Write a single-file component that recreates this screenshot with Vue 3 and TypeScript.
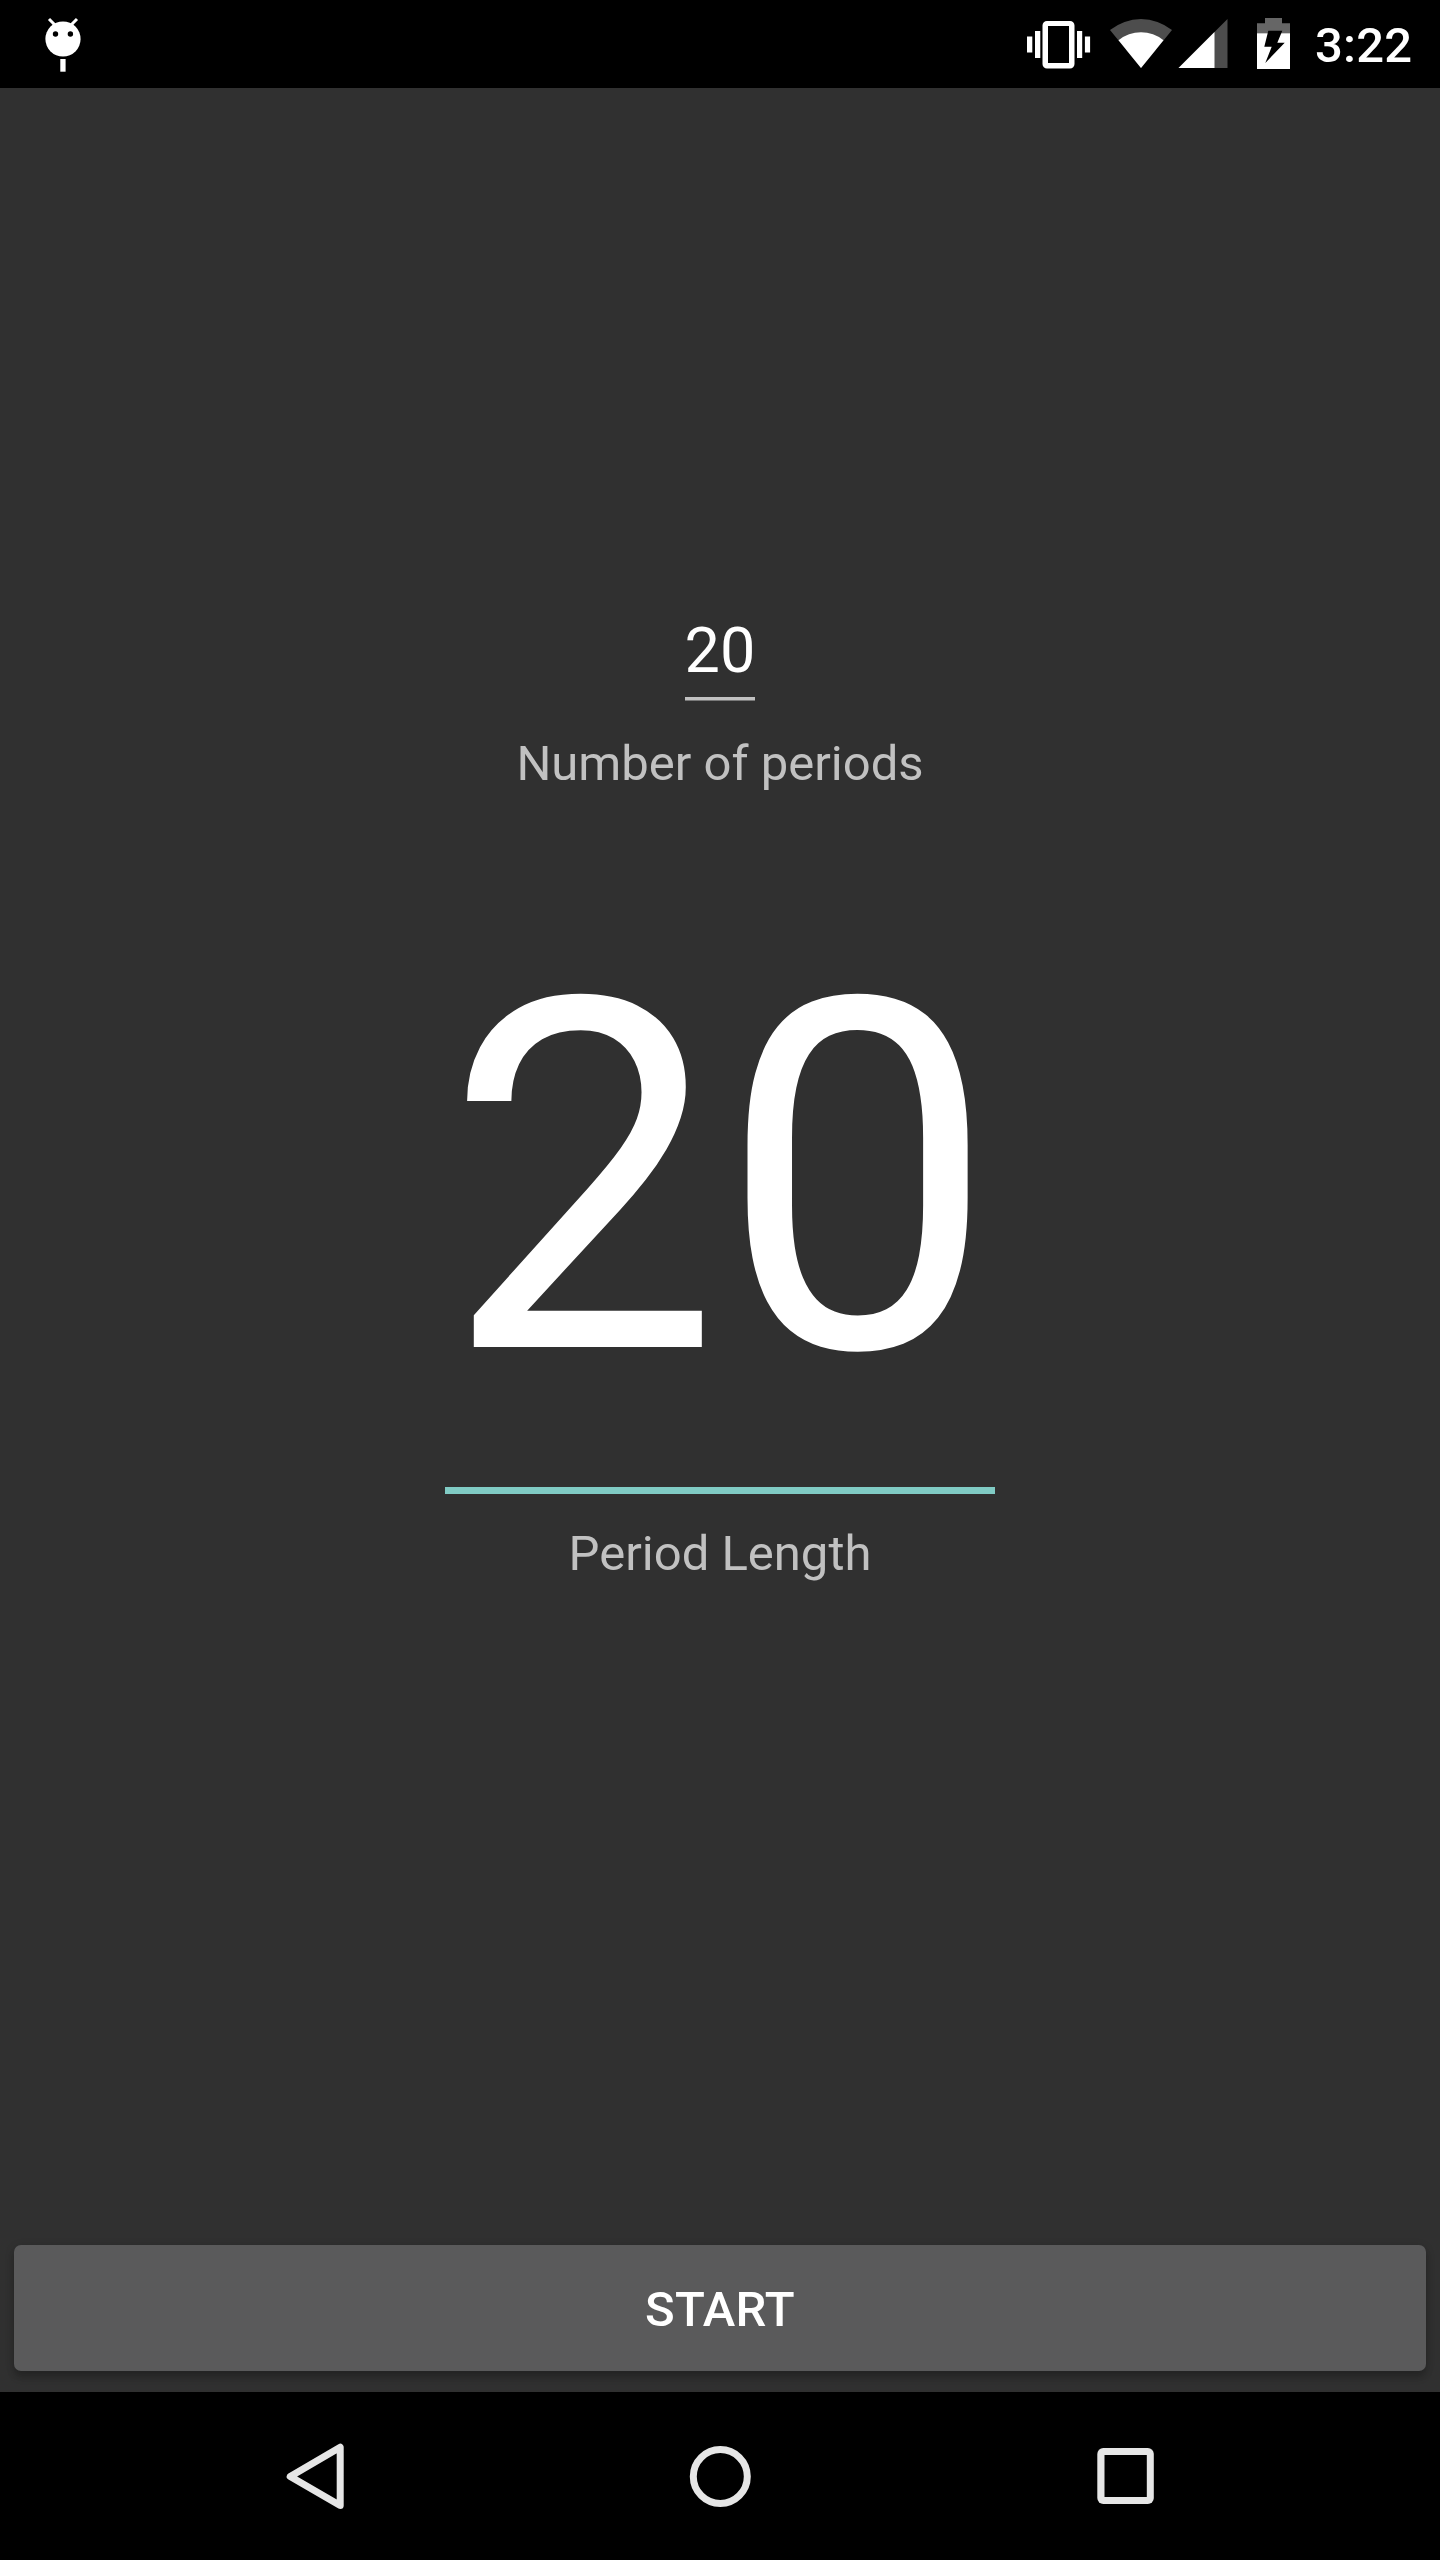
<script setup lang="ts">
interface Field {
  id: string
  value: string
  label: string
}

const time: string = '3:22'
const fields: Field[] = [
  { id: 'count', value: '20', label: 'Number of periods' },
  { id: 'length', value: '20', label: 'Period Length' },
]
</script>

<template>
  <div class="screen">
    <header class="status">
      <svg class="debug" width="40" height="88" viewBox="43 0 40 88">
        <path d="M49 19l7 7M77 19l-7 7" stroke="#fff" stroke-width="3" fill="none" />
        <circle cx="63" cy="39" r="17.6" fill="#fff" />
        <circle cx="55.5" cy="34" r="2.7" />
        <circle cx="70.4" cy="34" r="2.7" />
        <path d="M60.3 59h5.3v12.7h-5.3z" fill="#fff" />
      </svg>
      <div class="indicators">
        <svg width="64" height="88" viewBox="1027 0 64 88">
          <path d="M1027 36.5h5.3v16h-5.3zM1035 31h5.3v27h-5.3zM1077 31h5.2v27h-5.2zM1084.9 36.5h5.2v16h-5.2z" fill="#fff" />
          <path fill-rule="evenodd" d="M1047 21h23a4.5 4.5 0 0 1 4.5 4.5v38.6a4.5 4.5 0 0 1-4.5 4.5h-23a4.5 4.5 0 0 1-4.5-4.5V25.500a4.500 4.500 0 0 1 4.500-4.500zM1048 26v37h21V26z" fill="#fff" />
        </svg>
        <svg class="wifi" width="64" height="88" viewBox="1109 0 64 88">
          <path d="M1141 68L1110 30A49.500 49.500 0 0 1 1172 30z" fill="#4d4d4d" />
          <path d="M1141 68L1118.500 40.300A35.500 35.500 0 0 1 1163.500 40.300z" fill="#fff" />
        </svg>
        <svg class="signal" width="50" height="88" viewBox="1177.500 0 50 88">
          <path d="M1178 68L1227 19v49z" fill="#4d4d4d" />
          <path d="M1178 68L1214 32v36z" fill="#fff" />
        </svg>
        <svg class="battery" width="33" height="88" viewBox="1257 0 33 88">
          <path d="M1265 18h17v5.300h8v10.200h-33V23.300h8z" fill="#666" />
          <path d="M1257 33.300h33V69h-33z" fill="#fff" />
          <path d="M1268.300 30.700h14l-5 12h7.400L1265.300 63l6.400-16.300h-7.400z" />
        </svg>
        <span class="clock">{{ time }}</span>
      </div>
    </header>

    <main class="content">
      <section v-for="field in fields" :key="field.id" class="field" :class="field.id">
        <div class="value">{{ field.value }}</div>
        <div class="line"></div>
        <div class="label">{{ field.label }}</div>
      </section>
      <button class="start" type="button">START</button>
    </main>

    <nav class="nav">
      <svg width="80" height="80" viewBox="274 2436 80 80">
        <path d="M340.200 2447.200v58.400L290.200 2476.400z" fill="none" stroke="#e6e6e6" stroke-width="7" stroke-linejoin="round" />
      </svg>
      <svg width="80" height="80" viewBox="680 2436 80 80">
        <circle cx="720.3" cy="2476.500" r="27" fill="none" stroke="#e6e6e6" stroke-width="7" />
      </svg>
      <svg width="80" height="80" viewBox="1086 2436 80 80">
        <rect x="1097.300" y="2448" width="56.500" height="56" rx="6" fill="#e6e6e6" />
        <rect x="1104.500" y="2455" width="42.300" height="42" />
      </svg>
    </nav>
  </div>
</template>

<style>
body {
  margin: 0;
  background: #303030;
}
</style>

<style scoped>
.screen {
  width: 1440px;
  height: 2560px;
  display: flex;
  flex-direction: column;
  overflow: hidden;
  background: #303030;
  color: #fff;
  font-family: Roboto, sans-serif;
}
svg {
  display: block;
  flex: none;
}
.status {
  height: 88px;
  flex: none;
  box-sizing: border-box;
  padding: 0 28px 0 43px;
  display: flex;
  justify-content: space-between;
  background: #000;
}
.indicators {
  display: flex;
}
.wifi {
  margin-left: 18px;
}
.signal {
  margin-left: 4.5px;
}
.battery {
  margin-left: 29.5px;
}
.clock {
  width: 97px;
  margin-left: 25px;
  padding-top: 2px;
  line-height: 88px;
  font-size: 49px;
  font-weight: 500;
  letter-spacing: 0.2px;
  white-space: nowrap;
}
.content {
  flex: 1;
  display: flex;
  flex-direction: column;
  align-items: center;
}
.field {
  display: flex;
  flex-direction: column;
  align-items: center;
}
.label {
  font-size: 49px;
  line-height: 58px;
  color: #c1c1c1;
}
.count {
  padding-top: 525px;
}
.count .value {
  font-size: 63px;
  line-height: 75px;
}
.count .line {
  width: 70px;
  height: 3px;
  margin: 9px 0 35px;
  background: #c1c1c1;
  box-shadow: 0 1px #797979;
}
.length {
  padding-top: 99px;
}
.length .value {
  font-size: 490px;
  line-height: 575px;
}
.length .line {
  width: 550px;
  height: 7px;
  margin: 20px 0 31px;
  background: #80cbc4;
}
.start {
  box-sizing: border-box;
  width: 1412px;
  height: 126px;
  margin: auto 0 21px;
  padding: 4px 0 0;
  border: 0;
  border-radius: 7px;
  background: #5a5a5b;
  box-shadow: 0 7px 7px rgba(0, 0, 0, 0.16), 0 2px 10px rgba(0, 0, 0, 0.16);
  color: #fff;
  font: 500 49px/58px Roboto, sans-serif;
  letter-spacing: 0.2px;
}
.nav {
  height: 168px;
  flex: none;
  display: flex;
  justify-content: center;
  align-items: center;
  gap: 326px;
  background: #000;
}
</style>
